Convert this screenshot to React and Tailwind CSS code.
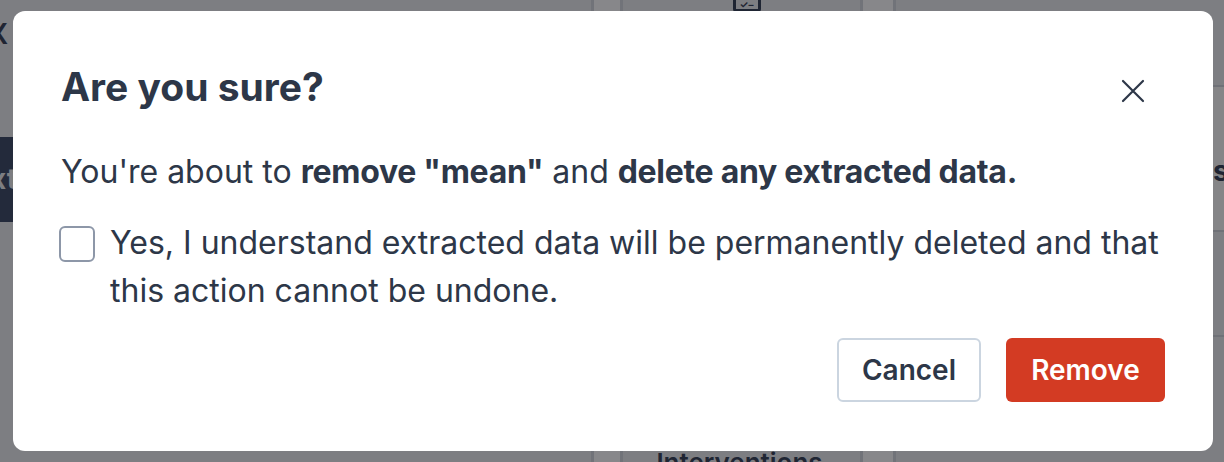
import { useState } from "react";

const Background = () => {
  return (
    <div className="flex h-[462px] w-[1224px] bg-[#7d7e82] text-[#1f2533]">
      {/* left pane */}
      <div className="w-[594px] flex flex-col border-r-[3px] border-[#717379]">
        <div className="h-[137px] pt-[18px] text-[28px] font-semibold leading-[32px] -ml-[12px]">
          <div>X</div>
          <div className="mt-[32px]">.</div>
        </div>
        <div className="h-[85px] w-[40px] bg-[#232a3b] pt-[26px] text-[28px] font-bold leading-[32px] text-[#7d7e82] -ml-[10px]">
          <span>xt</span>
        </div>
      </div>
      <div className="w-[29px] bg-[#87878a] border-r-[3px] border-[#717379]" />
      <div className="w-[237px] flex flex-col items-center justify-between">
        <div className="-mt-[10px] ml-[10px] h-[22px] w-[28px] rounded-[3px] border-[3px] border-[#1f2533] flex items-end justify-center">
          <span className="text-[10px] leading-[10px] font-bold">✓–</span>
        </div>
        <div className="mb-[-17px] -ml-[4px] text-[26px] font-semibold leading-[32px]">Interventions</div>
      </div>
      <div className="w-[36px] bg-[#87878a] border-l-[3px] border-r-[3px] border-[#717379]" />
      <div className="flex-1 flex justify-end">
        <div className="w-[11px] flex flex-col">
          <div className="h-[87px] border-b-[2px] border-[#6f7177]" />
          <div className="h-[145px] bg-[#858587] border-b-[2px] border-[#6f7177] pt-[68px] text-[28px] font-bold leading-[32px]">s</div>
          <div className="h-[105px] border-b-[2px] border-[#6f7177]" />
          <div className="flex-1" />
        </div>
      </div>
    </div>
  );
};

const App = () => {
  const [checked, setChecked] = useState(false);

  return (
    <div
      className="relative h-[462px] w-[1224px] overflow-hidden"
      style={{ fontFamily: "Inter, 'Noto Sans', sans-serif" }}
    >
      <Background />
      <div className="absolute inset-0 pl-[13px] pt-[11px]">
        <div className="relative w-[1200px] h-[440px] rounded-[12px] bg-white px-[48px] pt-[52px] text-[#2d3748]">
          <h2 className="text-[39px] font-bold leading-[48px]">Are you sure?</h2>
          <button
            type="button"
            className="absolute left-[1097px] top-[57px] flex h-[46px] w-[46px] items-center justify-center"
          >
            <svg width="24" height="24" viewBox="0 0 24 24" fill="none" stroke="#2d3748" strokeWidth="2.2" strokeLinecap="round">
              <path d="M2 2L22 22M22 2L2 22" />
            </svg>
          </button>

          <p className="mt-[37px] text-[32px] leading-[48px]">
            You're about to <span className="font-bold tracking-[-0.3px]">remove "mean"</span> and{" "}
            <span className="font-bold tracking-[-0.3px]">delete any extracted data.</span>
          </p>

          <label className="mt-[23px] flex items-start gap-[15px] text-[32px] leading-[48px]">
            <span
              className={`mt-[7px] ml-[-2px] h-[36px] w-[36px] shrink-0 rounded-[6px] border-2 ${
                checked ? "bg-[#3182ce] border-[#3182ce]" : "border-[#8d97a8]"
              }`}
              onClick={() => setChecked(!checked)}
            />
            <span>
              Yes, I understand extracted data will be permanently deleted and that this action cannot be undone.
            </span>
          </label>

          <div className="mt-[23px] flex justify-end gap-[25px]">
            <button
              type="button"
              className="h-[64px] w-[144px] rounded-[6px] border-2 border-[#cbd5e0] text-[28px] font-semibold text-[#2d3748]"
            >
              Cancel
            </button>
            <button
              type="button"
              className="h-[64px] w-[159px] rounded-[6px] bg-[#d33b23] text-[28px] font-semibold text-white"
            >
              Remove
            </button>
          </div>
        </div>
      </div>
    </div>
  );
};

export default App;
